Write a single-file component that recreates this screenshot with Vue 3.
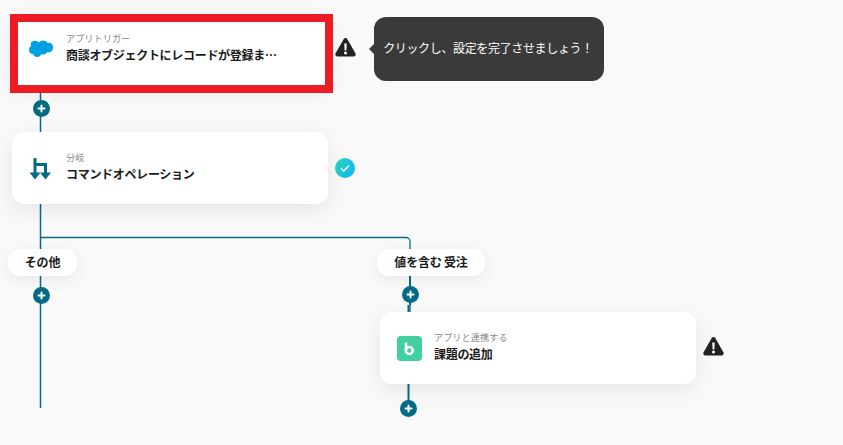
<script setup>
const plusPositions = ['p1', 'p2', 'p3', 'p4']
</script>

<template>
  <main class="canvas">
    <svg class="edges" width="843" height="445" viewBox="0 0 843 445" fill="none" stroke="#046b84">
      <path d="M40.500 88V408" stroke-width="1.500" />
      <path d="M40.500 237.500H406a4 4 0 0 1 4 4V312" stroke-width="1.300" />
      <path d="M410 250V305" stroke-width="2" />
      <path d="M408.500 305V312M408.500 384V402" stroke-width="2" />
    </svg>

    <article class="card c1">
      <svg class="icon" width="24" height="18" viewBox="0 0 24 18">
        <path fill="#00a1e0" d="M10 2.600C11 1.200 12.500.5 14.200.5c2.100 0 3.900 1.100 4.800 2.800.800-.3 1.500-.5 2.200-.4 1.700.3 2.800 2.100 2.800 4.300 0 3-1.800 5.200-4.300 5.200-.5 0-1-.1-1.400-.3-.8 1.500-2.200 2.500-3.800 2.500-.8 0-1.500-.2-2.100-.6-.7 1.800-2.300 3-4.100 3-2 0-3.600-1.300-4.200-3.100-.3.100-.6.100-.9.100C1.500 14 0 12.100 0 9.800c0-1.600.8-3 2-3.800C1.800 5.500 1.700 5 1.700 4.400 1.700 2.200 3.500.8 5.600.8 7.400.800 9 1.400 10 2.600z" />
      </svg>
      <div class="copy">
        <span class="kind">アプリトリガー</span>
        <strong class="title">商談オブジェクトにレコードが登録ま…</strong>
      </div>
    </article>
    <div class="highlight"></div>

    <svg class="state s1" width="21" height="19" viewBox="0 0 21 19">
      <path fill="#222" d="M8.600 1.200a2.200 2.200 0 0 1 3.800 0l8 14a2.200 2.200 0 0 1-1.900 3.300h-16A2.200 2.200 0 0 1 .6 15.200z" />
      <path fill="#fff" d="M9.300 5.500h2.400l-.3 7h-1.800zM10.500 13.500a1.500 1.500 0 1 1 0 3 1.500 1.500 0 0 1 0-3z" />
    </svg>
    <aside class="tip">クリックし、設定を完了させましょう！</aside>

    <article class="card c2">
      <svg class="icon branch" width="22" height="23" viewBox="0 0 22 23" fill="none">
        <path stroke="#046b84" stroke-width="3" d="M6 1V17M6 7.500H16.500V17" />
        <path fill="#046b84" d="M.5 15.500h11L6 22.500zM11 15.500h11L16.500 22.500z" />
      </svg>
      <div class="copy">
        <span class="kind">分岐</span>
        <strong class="title">コマンドオペレーション</strong>
      </div>
    </article>

    <svg class="state s2" width="20" height="20" viewBox="0 0 20 20">
      <defs>
        <linearGradient id="ok" x1="0" y1="0" x2="1" y2="0.6">
          <stop offset="0" stop-color="#2fd3b8" />
          <stop offset="1" stop-color="#10b9f0" />
        </linearGradient>
      </defs>
      <circle cx="10" cy="10" r="10" fill="url(#ok)" />
      <path d="M6 10.300l2.800 2.700L14 7.500" fill="none" stroke="#fff" stroke-width="1.300" />
    </svg>

    <div class="label l1">その他</div>
    <div class="label l2">値を含む 受注</div>

    <article class="card c3">
      <svg class="icon" width="25" height="25" viewBox="0 0 25 25">
        <rect width="25" height="25" rx="4" fill="#42cfa1" />
        <path d="M9 6.500V15" stroke="#fff" stroke-width="2.500" fill="none" />
        <circle cx="12.300" cy="14.500" r="3.500" stroke="#fff" stroke-width="2.500" fill="none" />
      </svg>
      <div class="copy">
        <span class="kind">アプリと連携する</span>
        <strong class="title">課題の追加</strong>
      </div>
    </article>

    <svg class="state s3" width="21" height="19" viewBox="0 0 21 19">
      <path fill="#222" d="M8.600 1.200a2.200 2.200 0 0 1 3.800 0l8 14a2.200 2.200 0 0 1-1.900 3.300h-16A2.200 2.200 0 0 1 .6 15.200z" />
      <path fill="#fff" d="M9.300 5.500h2.400l-.3 7h-1.800zM10.500 13.500a1.500 1.500 0 1 1 0 3 1.500 1.500 0 0 1 0-3z" />
    </svg>

    <button v-for="p in plusPositions" :key="p" class="plus" :class="p" type="button" aria-label="追加">
      <svg width="17" height="17" viewBox="0 0 17 17">
        <path d="M8.500 5.500v6M5.500 8.500h6" stroke="#fff" stroke-width="2" stroke-linecap="round" />
      </svg>
    </button>
  </main>
</template>

<style>
html, body { margin: 0; background: #f9f9f9; }
</style>

<style scoped>
.canvas {
  position: relative;
  width: 843px;
  height: 445px;
  overflow: hidden;
  background: #f9f9f9;
  font-family: "Noto Sans CJK JP", "Noto Sans", sans-serif;
  color: #1a1a1a;
}
.edges { position: absolute; left: 0; top: 0; }
.card {
  position: absolute;
  box-sizing: border-box;
  width: 316px;
  height: 72px;
  display: flex;
  align-items: center;
  gap: 13px;
  padding: 0 17px;
  background: #fff;
  border-radius: 12px;
  box-shadow: 0 6px 20px rgba(0, 0, 0, 0.08);
}
.c1 { left: 12px; top: 13px; }
.c2 { left: 12px; top: 132px; }
.c3 { left: 380px; top: 312px; gap: 12px; }
.icon { flex: none; }
.branch { margin-right: 2px; }
.copy { display: flex; flex-direction: column; margin-top: -2px; }
.kind {
  font-size: 9.200px;
  line-height: 13px;
  color: #8a8a8a;
}
.title {
  font-size: 12px;
  letter-spacing: -0.3px;
  line-height: 19px;
  font-weight: 700;
  color: #1a1a1a;
  white-space: nowrap;
}
.highlight {
  position: absolute;
  left: 10px;
  top: 14px;
  width: 323px;
  height: 79px;
  box-sizing: border-box;
  border: 8px solid #ed1c24;
}
.state { position: absolute; }
.s1 { left: 335px; top: 38px; }
.s2 { left: 335px; top: 158px; }
.s3 { left: 703px; top: 337px; }
.tip {
  position: absolute;
  left: 374px;
  top: 17px;
  box-sizing: border-box;
  width: 230px;
  height: 64px;
  padding: 0 2px 3px 0;
  display: flex;
  align-items: center;
  justify-content: center;
  background: #3a3a3a;
  color: #fff;
  font-size: 12px;
  letter-spacing: -0.35px;
  border-radius: 12px;
  white-space: nowrap;
}
.tip::before {
  content: "";
  position: absolute;
  left: -5px;
  top: 27px;
  width: 0;
  height: 0;
  border-top: 5px solid transparent;
  border-bottom: 5px solid transparent;
  border-right: 5px solid #3a3a3a;
}
.label {
  position: absolute;
  top: 249px;
  height: 27px;
  padding-bottom: 2px;
  box-sizing: border-box;
  display: flex;
  align-items: center;
  justify-content: center;
  background: #fff;
  border-radius: 12px;
  font-size: 12px;
  letter-spacing: -0.2px;
  font-weight: 700;
  box-shadow: 0 4px 14px rgba(0, 0, 0, 0.07);
  white-space: nowrap;
}
.l1 { left: 8px; width: 69px; }
.l2 { left: 377px; width: 108px; }
.plus {
  position: absolute;
  width: 17px;
  height: 17px;
  padding: 0;
  border: 0;
  border-radius: 50%;
  background: #046b84;
  display: block;
}
.plus svg { display: block; }
.p1 { left: 33px; top: 100px; }
.p2 { left: 33px; top: 287px; }
.p3 { left: 402px; top: 286px; }
.p4 { left: 400px; top: 400px; }
</style>
